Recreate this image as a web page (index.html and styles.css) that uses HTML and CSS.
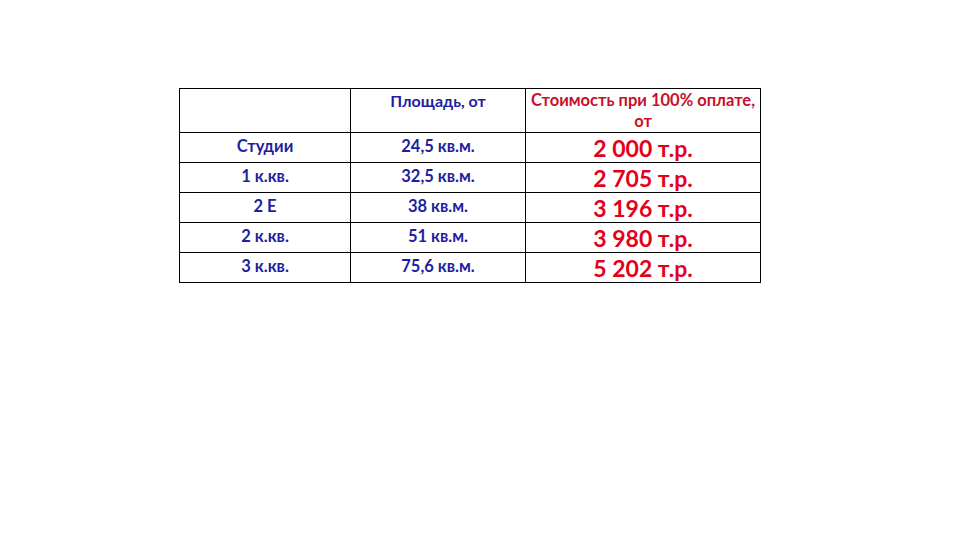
FILE: index.html
```html
<!DOCTYPE html>
<html lang="ru">
<head>
<meta charset="utf-8">
<title>Цены</title>
<link rel="stylesheet" href="styles.css">
</head>
<body>
<div class="page">
  <table class="prices">
    <colgroup>
      <col class="c1"><col class="c2"><col class="c3">
    </colgroup>
    <thead>
      <tr class="head">
        <th></th>
        <th class="blue">Площадь, от</th>
        <th class="red">Стоимость при 100% оплате,<br>от</th>
      </tr>
    </thead>
    <tbody>
      <tr><td class="blue">Студии</td><td class="blue">24,5 кв.м.</td><td class="price">2 000 т.р.</td></tr>
      <tr><td class="blue">1 к.кв.</td><td class="blue">32,5 кв.м.</td><td class="price">2 705 т.р.</td></tr>
      <tr><td class="blue">2 Е</td><td class="blue">38 кв.м.</td><td class="price">3 196 т.р.</td></tr>
      <tr><td class="blue">2 к.кв.</td><td class="blue">51 кв.м.</td><td class="price">3 980 т.р.</td></tr>
      <tr><td class="blue">3 к.кв.</td><td class="blue">75,6 кв.м.</td><td class="price">5 202 т.р.</td></tr>
    </tbody>
  </table>
</div>
</body>
</html>
```

FILE: styles.css
```css
html, body {
  margin: 0;
  padding: 0;
  background: #ffffff;
}
.page {
  width: 960px;
  height: 540px;
  padding: 88px 0 0 179px;
  box-sizing: border-box;
  font-family: Lato, "Open Sans", "Liberation Sans", sans-serif;
}
.prices {
  border-collapse: collapse;
  table-layout: fixed;
  width: 581px;
}
.c1 { width: 171px; }
.c2 { width: 175px; }
.c3 { width: 235px; }
.prices th, .prices td {
  border: 1px solid #000;
  padding: 0;
  text-align: center;
}
.head th {
  height: 41px;
  vertical-align: top;
  padding-top: 1px;
}
.prices td {
  height: 27px;
  vertical-align: middle;
  padding-bottom: 2px;
}
.blue {
  color: #1e1ea0;
  font-size: 16.5px;
  line-height: 21px;
  font-weight: 700;
}
.head .blue {
  font-size: 16px;
}
.red {
  color: #c8102a;
  font-size: 16.5px;
  line-height: 21px;
  font-weight: 700;
}
.prices td.price {
  color: #e4001b;
  font-size: 23px;
  font-weight: 700;
  line-height: 27px;
  padding-bottom: 0;
  padding-top: 2px;
}
```
